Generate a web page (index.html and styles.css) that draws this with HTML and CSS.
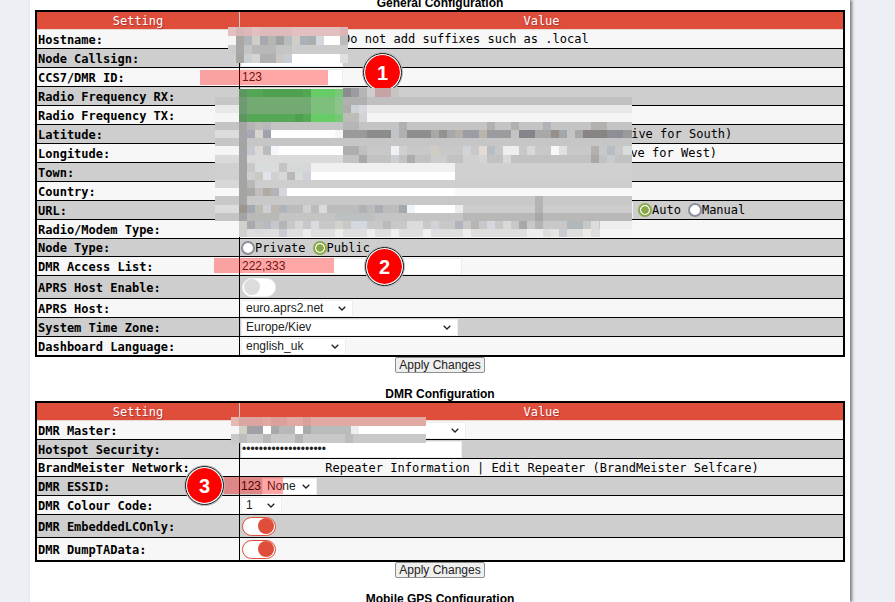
FILE: index.html
```html
<!DOCTYPE html>
<html lang="en">
<head>
<meta charset="utf-8">
<title>Configuration</title>
<link rel="stylesheet" href="styles.css">
</head>
<body>
<div class="page">
  <h2 class="title">General Configuration</h2>
  <table class="config">
    <tr class="head"><th>Setting</th><th>Value</th></tr>
    <tr><td>Hostname:</td><td><input class="w98" type="text"><span class="note">Do not add suffixes such as .local</span></td></tr>
    <tr><td>Node Callsign:</td><td><input class="w102" type="text"></td></tr>
    <tr><td>CCS7/DMR ID:</td><td><input class="w102" type="text" value="123"></td></tr>
    <tr><td>Radio Frequency RX:</td><td><input class="w102" type="text"></td></tr>
    <tr><td>Radio Frequency TX:</td><td><input class="w102" type="text"></td></tr>
    <tr><td>Latitude:</td><td><input class="wlat" type="text"> decimal degrees (positive for South)</td></tr>
    <tr><td>Longitude:</td><td><input class="wlon" type="text"> decimal degrees (negative for West)</td></tr>
    <tr><td>Town:</td><td><input class="w221" type="text"></td></tr>
    <tr><td>Country:</td><td><input class="w221" type="text"></td></tr>
    <tr><td>URL:</td><td><input class="wurl" type="text"><span class="radios url-radios"><input class="radio on" type="radio" name="u" checked>Auto <input class="radio" type="radio" name="u">Manual</span></td></tr>
    <tr><td>Radio/Modem Type:</td><td></td></tr>
    <tr class="short"><td>Node Type:</td><td><span class="radios"><input class="radio" type="radio" name="n">Private <input class="radio on" type="radio" name="n" checked>Public</span></td></tr>
    <tr><td>DMR Access List:</td><td><input class="w221" type="text" value="222,333"></td></tr>
    <tr class="tall"><td>APRS Host Enable:</td><td><span class="toggle"></span></td></tr>
    <tr><td>APRS Host:</td><td><select class="s112"><option>euro.aprs2.net</option></select></td></tr>
    <tr><td>System Time Zone:</td><td><select class="s217"><option>Europe/Kiev</option></select></td></tr>
    <tr class="last"><td>Dashboard Language:</td><td><select class="s105"><option>english_uk</option></select></td></tr>
  </table>
  <div class="actions"><button type="button">Apply Changes</button></div>

  <h2 class="title second">DMR Configuration</h2>
  <table class="config">
    <tr class="head"><th>Setting</th><th>Value</th></tr>
    <tr><td>DMR Master:</td><td><select class="s225"><option>&nbsp;</option></select></td></tr>
    <tr><td>Hotspot Security:</td><td><input class="w221" type="password" value="passwordpasswordpass"></td></tr>
    <tr class="short center"><td>BrandMeister Network:</td><td>Repeater Information | Edit Repeater (BrandMeister Selfcare)</td></tr>
    <tr><td>DMR ESSID:</td><td><span class="essid">123</span><select class="s55"><option>None</option></select></td></tr>
    <tr><td>DMR Colour Code:</td><td><select class="s41"><option>1</option></select></td></tr>
    <tr class="tall"><td>DMR EmbeddedLCOnly:</td><td><span class="toggle on"></span></td></tr>
    <tr class="tall last"><td>DMR DumpTAData:</td><td><span class="toggle on"></span></td></tr>
  </table>
  <div class="actions"><button type="button">Apply Changes</button></div>
  <h2 class="title third">Mobile GPS Configuration</h2>
</div>

<div class="mark mark1"></div>
<div class="mark mark2"></div>
<div class="mark mark3"></div>
<div class="badge badge1">1</div>
<div class="badge badge2">2</div>
<div class="badge badge3">3</div>

<svg class="mosaic" width="895" height="602" viewBox="0 0 895 602" shape-rendering="crispEdges" aria-hidden="true">
  <!-- hostname / callsign -->
  <rect x="228" y="27" width="120" height="9" fill="#e3c0c0"/>
  <rect x="236" y="27" width="8" height="9" fill="#d6b6b6"/><rect x="244" y="27" width="8" height="9" fill="#dcb8b8"/><rect x="260" y="27" width="32" height="9" fill="#dfbaba"/><rect x="340" y="27" width="8" height="9" fill="#dcb4b4"/>
  <rect x="228" y="36" width="120" height="9" fill="#fff"/><rect x="228" y="36" width="8" height="9" fill="#f5f5f5"/>
  <rect x="236" y="36" width="8" height="9" fill="#a9a7a3"/><rect x="244" y="36" width="8" height="9" fill="#b0b6b8"/><rect x="252" y="36" width="8" height="9" fill="#cfcfc8"/><rect x="260" y="36" width="8" height="9" fill="#a8a8ae"/><rect x="268" y="36" width="8" height="9" fill="#b4b6b4"/><rect x="276" y="36" width="8" height="9" fill="#a0a2a4"/><rect x="284" y="36" width="8" height="9" fill="#b8bcbc"/><rect x="292" y="36" width="8" height="9" fill="#d0cec8"/><rect x="300" y="36" width="8" height="9" fill="#a8b2b8"/><rect x="308" y="36" width="8" height="9" fill="#aaaeae"/><rect x="316" y="36" width="8" height="9" fill="#d4d8de"/><rect x="340" y="36" width="8" height="9" fill="#bbb"/>
  <rect x="228" y="45" width="120" height="9" fill="#ccc"/><rect x="236" y="45" width="8" height="9" fill="#a8a8a8"/><rect x="244" y="45" width="8" height="9" fill="#c4c4c4"/><rect x="252" y="45" width="24" height="9" fill="#b8b8b8"/><rect x="276" y="45" width="16" height="9" fill="#c4c4c4"/>
  <rect x="236" y="54" width="112" height="9" fill="#fff"/><rect x="236" y="54" width="8" height="9" fill="#a8a5a0"/><rect x="244" y="54" width="8" height="9" fill="#c8d0d4"/><rect x="252" y="54" width="8" height="9" fill="#d8d4d4"/><rect x="260" y="54" width="16" height="9" fill="#b0b0b0"/><rect x="276" y="54" width="8" height="9" fill="#ccc6c4"/><rect x="284" y="54" width="8" height="9" fill="#c8ccd4"/><rect x="340" y="54" width="8" height="9" fill="#e0e0e0"/>

  <!-- top strip over the first badge -->
  <rect x="343" y="88" width="289" height="9" fill="#cdcdcd"/><rect x="343" y="88" width="8" height="9" fill="#8c8c8c"/><rect x="351" y="88" width="8" height="9" fill="#9b9ba0"/><rect x="359" y="88" width="8" height="9" fill="#b5b5b5"/><rect x="375" y="88" width="16" height="9" fill="#c4a4a4"/><rect x="391" y="88" width="8" height="9" fill="#c8c4c4"/>

  <!-- large block: base bands -->
  <rect x="215" y="97" width="417" height="8" fill="#c0c0c0"/>
  <rect x="215" y="105" width="417" height="8" fill="#e8e8e8"/>
  <rect x="215" y="113" width="417" height="9" fill="#f5f5f5"/>
  <rect x="215" y="122" width="417" height="8" fill="#c4c4c4"/>
  <rect x="215" y="130" width="417" height="8" fill="#9a9a9a"/><rect x="215" y="130" width="24" height="8" fill="#dcdcdc"/>
  <rect x="215" y="138" width="417" height="8" fill="#c6c6c6"/>
  <rect x="215" y="146" width="417" height="9" fill="#c8c8c8"/><rect x="215" y="146" width="24" height="9" fill="#f5f5f5"/>
  <rect x="215" y="155" width="417" height="8" fill="#c2c2c2"/><rect x="215" y="155" width="128" height="8" fill="#dadada"/>
  <rect x="215" y="163" width="417" height="9" fill="#d0d0d0"/><rect x="311" y="163" width="144" height="9" fill="#f0f0f0"/>
  <rect x="215" y="172" width="417" height="8" fill="#d0d0d0"/><rect x="311" y="172" width="144" height="8" fill="#fff"/>
  <rect x="215" y="180" width="417" height="8" fill="#cecece"/><rect x="215" y="180" width="24" height="8" fill="#d8d8d8"/>
  <rect x="215" y="188" width="417" height="8" fill="#f8f8f8"/><rect x="287" y="188" width="168" height="8" fill="#fff"/>
  <rect x="215" y="196" width="417" height="9" fill="#c8c8c8"/>
  <rect x="215" y="205" width="417" height="8" fill="#bcbcbc"/><rect x="215" y="205" width="24" height="8" fill="#dcdcdc"/><rect x="415" y="205" width="40" height="8" fill="#fff"/><rect x="455" y="205" width="177" height="8" fill="#cdcdcd"/>
  <rect x="215" y="213" width="417" height="8" fill="#c4c4c4"/><rect x="463" y="213" width="169" height="8" fill="#b8b8b8"/>
  <rect x="215" y="221" width="417" height="8" fill="#c8c8c8"/><rect x="215" y="221" width="24" height="8" fill="#f7f7f7"/><rect x="600" y="221" width="32" height="8" fill="#eeeeee"/>
  <rect x="215" y="229" width="417" height="8" fill="#dedede"/><rect x="215" y="229" width="24" height="8" fill="#f7f7f7"/><rect x="600" y="229" width="32" height="8" fill="#f5f5f5"/>

  <!-- column at 239 -->
  <rect x="239" y="122" width="8" height="107" fill="#a4a4a4"/>
  <rect x="215" y="97" width="24" height="8" fill="#c6c6c6"/>
  <rect x="239" y="221" width="8" height="8" fill="#d0d0cc"/><rect x="239" y="229" width="8" height="8" fill="#d0d0cc"/>

  <!-- green block -->
  <rect x="239" y="89" width="72" height="8" fill="#53a653"/><rect x="239" y="89" width="8" height="8" fill="#5f9560"/>
  <rect x="239" y="97" width="72" height="8" fill="#72ac72"/><rect x="239" y="97" width="8" height="8" fill="#6f9a72"/>
  <rect x="239" y="105" width="72" height="9" fill="#74a974"/><rect x="239" y="105" width="8" height="9" fill="#6f9a72"/>
  <rect x="239" y="114" width="72" height="8" fill="#55a855"/><rect x="239" y="114" width="8" height="8" fill="#5f9560"/>
  <rect x="263" y="89" width="40" height="8" fill="#4fa04f"/><rect x="295" y="114" width="8" height="8" fill="#4ca14c"/>
  <rect x="311" y="89" width="24" height="8" fill="#66cc66"/><rect x="335" y="89" width="8" height="8" fill="#78c878"/>
  <rect x="311" y="97" width="24" height="17" fill="#7cc07c"/><rect x="335" y="97" width="8" height="17" fill="#8dc38d"/>
  <rect x="311" y="114" width="24" height="8" fill="#66cc66"/><rect x="335" y="114" width="8" height="8" fill="#78c878"/>

  <!-- right of green -->
  <rect x="343" y="97" width="24" height="8" fill="#b0b0b0"/>
  <rect x="343" y="105" width="8" height="8" fill="#adadad"/><rect x="351" y="105" width="8" height="8" fill="#cdd0d4"/><rect x="359" y="105" width="8" height="8" fill="#d8d8dc"/>
  <rect x="343" y="113" width="16" height="9" fill="#bdbdb8"/><rect x="359" y="113" width="8" height="9" fill="#d2d2d8"/>

  <!-- latitude row -->
  <rect x="247" y="122" width="8" height="8" fill="#b4b4b6"/><rect x="255" y="122" width="8" height="8" fill="#bcbcb8"/><rect x="263" y="122" width="8" height="8" fill="#b8b8bc"/>
  <rect x="247" y="130" width="8" height="8" fill="#a8a8b4"/><rect x="255" y="130" width="8" height="8" fill="#d6d6cf"/><rect x="263" y="130" width="8" height="8" fill="#a0a2ae"/>
  <rect x="271" y="130" width="64" height="8" fill="#fff"/><rect x="335" y="130" width="8" height="8" fill="#f6f6f4"/>
  <rect x="343" y="122" width="16" height="8" fill="#b6b6b6"/><rect x="399" y="122" width="8" height="8" fill="#b0b0b0"/><rect x="487" y="122" width="8" height="8" fill="#b0b2b2"/><rect x="511" y="122" width="8" height="8" fill="#b4b0ae"/><rect x="543" y="122" width="8" height="8" fill="#b0b4b8"/><rect x="591" y="122" width="16" height="8" fill="#b4b0ae"/>
  <rect x="367" y="130" width="24" height="8" fill="#8c8c8c"/><rect x="391" y="130" width="8" height="8" fill="#c0c4c8"/><rect x="399" y="130" width="8" height="8" fill="#b0b0b0"/><rect x="407" y="130" width="24" height="8" fill="#8e8e8e"/><rect x="431" y="130" width="8" height="8" fill="#aaa8a4"/><rect x="439" y="130" width="8" height="8" fill="#92928e"/><rect x="447" y="130" width="8" height="8" fill="#a8a8ac"/><rect x="455" y="130" width="8" height="8" fill="#b4b0a8"/><rect x="463" y="130" width="16" height="8" fill="#9a9ea4"/><rect x="479" y="130" width="8" height="8" fill="#bcb4ac"/><rect x="487" y="130" width="24" height="8" fill="#9a9ca0"/><rect x="511" y="130" width="8" height="8" fill="#c4c4c4"/><rect x="519" y="130" width="16" height="8" fill="#84848a"/><rect x="535" y="130" width="16" height="8" fill="#a8a8a8"/><rect x="551" y="130" width="8" height="8" fill="#96908a"/><rect x="559" y="130" width="8" height="8" fill="#a0a8ac"/><rect x="567" y="130" width="8" height="8" fill="#c4c4c4"/><rect x="575" y="130" width="8" height="8" fill="#a8a8a8"/><rect x="583" y="130" width="24" height="8" fill="#888484"/><rect x="607" y="130" width="16" height="8" fill="#8c9094"/>
  <!-- longitude row -->
  <rect x="247" y="146" width="8" height="9" fill="#c4c8d0"/><rect x="255" y="146" width="8" height="9" fill="#dcd8d6"/><rect x="263" y="146" width="8" height="9" fill="#bcbcbc"/><rect x="271" y="146" width="8" height="9" fill="#f4f8fc"/><rect x="279" y="146" width="64" height="9" fill="#fff"/>
  <rect x="343" y="146" width="16" height="9" fill="#b0aeac"/><rect x="359" y="146" width="8" height="9" fill="#c0c0c0"/><rect x="391" y="146" width="8" height="9" fill="#eef0f4"/><rect x="399" y="146" width="8" height="9" fill="#d0d0ce"/><rect x="431" y="146" width="8" height="9" fill="#d0ccc4"/><rect x="463" y="146" width="8" height="9" fill="#d0d4d8"/><rect x="479" y="146" width="8" height="9" fill="#e4dcd4"/><rect x="487" y="146" width="8" height="9" fill="#b8bcc4"/><rect x="503" y="146" width="16" height="9" fill="#eeeef0"/><rect x="527" y="146" width="8" height="9" fill="#d8d8d8"/><rect x="551" y="146" width="8" height="9" fill="#f8f8f8"/><rect x="559" y="146" width="8" height="9" fill="#e0e0dc"/><rect x="591" y="146" width="8" height="9" fill="#b4b0ae"/><rect x="607" y="146" width="8" height="9" fill="#b8bcc4"/><rect x="623" y="146" width="9" height="9" fill="#d8dcdc"/>
  <rect x="359" y="155" width="8" height="8" fill="#a8a8aa"/><rect x="391" y="155" width="8" height="8" fill="#ccd0d2"/><rect x="407" y="155" width="8" height="8" fill="#acacac"/><rect x="431" y="155" width="16" height="8" fill="#cccccc"/><rect x="463" y="155" width="16" height="8" fill="#d0d0d0"/><rect x="479" y="155" width="8" height="8" fill="#d4d4d4"/><rect x="503" y="155" width="8" height="8" fill="#d8d8d8"/><rect x="591" y="155" width="8" height="8" fill="#aaa8a6"/><rect x="607" y="155" width="8" height="8" fill="#c8ccd0"/>
  <!-- town / country -->
  <rect x="247" y="163" width="8" height="9" fill="#c8c8c8"/><rect x="255" y="163" width="24" height="9" fill="#d8dcdc"/><rect x="279" y="163" width="8" height="9" fill="#c4c4c4"/><rect x="287" y="163" width="8" height="9" fill="#d8d8d8"/><rect x="295" y="163" width="16" height="9" fill="#d4d8d8"/>
  <rect x="255" y="172" width="8" height="8" fill="#c8c8c4"/><rect x="263" y="172" width="8" height="8" fill="#e0e4e8"/><rect x="279" y="172" width="8" height="8" fill="#d8d8d8"/><rect x="287" y="172" width="8" height="8" fill="#b8b8b8"/><rect x="295" y="172" width="8" height="8" fill="#d8dcd8"/><rect x="303" y="172" width="8" height="8" fill="#d0d0d8"/>
  <rect x="247" y="180" width="8" height="8" fill="#b8b8b8"/>
  <rect x="247" y="188" width="8" height="8" fill="#aca8a4"/><rect x="255" y="188" width="8" height="8" fill="#bebebe"/><rect x="263" y="188" width="8" height="8" fill="#b0aca4"/><rect x="271" y="188" width="8" height="8" fill="#b4b4b8"/><rect x="279" y="188" width="8" height="8" fill="#d4d8dc"/>
  <!-- url row -->
  <rect x="239" y="205" width="8" height="8" fill="#9c958c"/><rect x="247" y="205" width="8" height="8" fill="#a4a8b4"/><rect x="255" y="205" width="8" height="8" fill="#bcbcb4"/><rect x="263" y="205" width="8" height="8" fill="#ccd0d4"/><rect x="271" y="205" width="8" height="8" fill="#bcb8b0"/><rect x="279" y="205" width="8" height="8" fill="#b0b4b8"/><rect x="303" y="205" width="8" height="8" fill="#d0d0d0"/><rect x="319" y="205" width="8" height="8" fill="#d8dcdc"/><rect x="359" y="205" width="8" height="8" fill="#aeb2b2"/><rect x="375" y="205" width="8" height="8" fill="#aaaeb4"/><rect x="399" y="205" width="8" height="8" fill="#a4a8ac"/><rect x="407" y="205" width="8" height="8" fill="#f0f4f8"/><rect x="455" y="205" width="8" height="8" fill="#ebebeb"/><rect x="535" y="205" width="8" height="8" fill="#b4b4b4"/>
  <rect x="247" y="213" width="32" height="8" fill="#b8bab8"/><rect x="335" y="213" width="40" height="8" fill="#bcc0c0"/><rect x="535" y="213" width="8" height="8" fill="#a8a8a8"/><rect x="535" y="196" width="8" height="17" fill="#b4b4b4"/>
  <!-- modem row -->
  <rect x="247" y="221" width="8" height="8" fill="#aca8b0"/><rect x="255" y="221" width="8" height="8" fill="#bcc0bc"/><rect x="263" y="221" width="8" height="8" fill="#b8bac0"/><rect x="271" y="221" width="8" height="8" fill="#c4c8cc"/><rect x="279" y="221" width="8" height="8" fill="#b4b4b4"/><rect x="295" y="221" width="8" height="8" fill="#d4d8d8"/><rect x="311" y="221" width="8" height="8" fill="#d8dce0"/><rect x="335" y="221" width="8" height="8" fill="#d4d0cc"/><rect x="351" y="221" width="16" height="8" fill="#d4d8e0"/><rect x="383" y="221" width="8" height="8" fill="#b8bcbc"/><rect x="407" y="221" width="16" height="8" fill="#dcdcdc"/><rect x="431" y="221" width="8" height="8" fill="#d0d4d8"/><rect x="455" y="221" width="8" height="8" fill="#b0b4bc"/><rect x="471" y="221" width="8" height="8" fill="#b8b4b0"/><rect x="487" y="221" width="8" height="8" fill="#d4d8dc"/><rect x="503" y="221" width="8" height="8" fill="#dcd8d4"/><rect x="519" y="221" width="8" height="8" fill="#a8a8ac"/><rect x="535" y="221" width="8" height="8" fill="#b4b4b4"/><rect x="567" y="221" width="16" height="8" fill="#b0b8bc"/><rect x="591" y="221" width="8" height="8" fill="#dcdcdc"/>
  <rect x="255" y="229" width="8" height="8" fill="#d8dcdc"/><rect x="279" y="229" width="8" height="8" fill="#c8ccd0"/><rect x="303" y="229" width="8" height="8" fill="#eceaec"/><rect x="335" y="229" width="8" height="8" fill="#ecece8"/><rect x="367" y="229" width="8" height="8" fill="#eceff0"/><rect x="391" y="229" width="8" height="8" fill="#f0f0f0"/><rect x="423" y="229" width="8" height="8" fill="#f0f0ec"/><rect x="463" y="229" width="8" height="8" fill="#f0eeea"/><rect x="527" y="229" width="16" height="8" fill="#eceeee"/><rect x="551" y="229" width="8" height="8" fill="#e8e4e0"/><rect x="583" y="229" width="8" height="8" fill="#ecebe6"/><rect x="559" y="229" width="8" height="8" fill="#c8ccd0"/>

  <!-- dmr master -->
  <rect x="231" y="417" width="195" height="9" fill="#e0aaa2"/><rect x="239" y="417" width="8" height="9" fill="#d8a8a0"/><rect x="247" y="417" width="16" height="9" fill="#dca4a0"/><rect x="271" y="417" width="16" height="9" fill="#dca09c"/><rect x="303" y="417" width="8" height="9" fill="#d8a09a"/><rect x="231" y="417" width="8" height="9" fill="#e8b8b0"/>
  <rect x="231" y="426" width="195" height="8" fill="#fff"/><rect x="231" y="426" width="8" height="8" fill="#f5f5f5"/><rect x="239" y="426" width="8" height="8" fill="#d0d0c4"/><rect x="247" y="426" width="16" height="8" fill="#a0a0a6"/><rect x="271" y="426" width="8" height="8" fill="#a8a8a8"/><rect x="279" y="426" width="16" height="8" fill="#b8b8b8"/><rect x="303" y="426" width="8" height="8" fill="#aaaaaa"/><rect x="311" y="426" width="40" height="8" fill="#b8bcbc"/><rect x="351" y="426" width="8" height="8" fill="#eeeeee"/>
  <rect x="231" y="434" width="195" height="9" fill="#c8c8c8"/><rect x="239" y="434" width="8" height="9" fill="#bcbcbc"/><rect x="263" y="434" width="8" height="9" fill="#b8b8b8"/><rect x="295" y="434" width="8" height="9" fill="#b4b4b4"/><rect x="345" y="434" width="8" height="9" fill="#bcbcbc"/>
</svg>
</body>
</html>
```

FILE: styles.css
```css
* { box-sizing: border-box; }

html, body {
  margin: 0;
  height: 602px;
  overflow: hidden;
}

body {
  position: relative;
  background: #ecf0f5;
  font-family: "DejaVu Sans Mono", monospace;
  font-size: 12px;
  color: #000;
}

.page {
  width: 820px;
  height: 602px;
  margin-left: 30px;
  padding: 0 5px;
  background: #fff;
  box-shadow: 2px 0 3px #777;
  overflow: hidden;
}

.title {
  margin: 0;
  height: 10px;
  font: bold 12px/6px "Liberation Sans", sans-serif;
  text-align: center;
  white-space: nowrap;
}

.title.second { margin-top: 18px; height: 10px; }
.title.third { margin-top: 17px; height: 12px; line-height: 8px; }

.config {
  width: 810px;
  table-layout: fixed;
  border-collapse: separate;
  border-spacing: 0;
  border: 2px solid #000;
}

.config th {
  height: 18px;
  padding: 0;
  background: #df4e3a;
  color: #fff;
  font-weight: normal;
  text-shadow: 1px 1px 1px #a33;
  border-bottom: 1px solid #e8d8d4;
  vertical-align: middle;
}

.config th:first-child {
  width: 203px;
  border-right: 1px solid #e0c8c4;
}

.config td {
  height: 19px;
  padding: 0 0 0 1px;
  border-bottom: 1px solid #000;
  white-space: nowrap;
  vertical-align: middle;
  background: #f7f7f7;
  overflow: hidden;
}

.config td:first-child {
  padding-top: 2px;
  border-right: 1px solid #000;
  font-weight: bold;
}

.config tr:nth-child(odd) td { background: #cecece; }
.config tr.short td { height: 18px; padding-top: 0; }
.config tr.tall td { height: 23px; }
.config tr.last td { border-bottom: 0; height: 18px; }
.config tr.tall.last td { height: 22px; }
.config tr.center td:last-child { text-align: center; }

input[type="text"], input[type="password"], select {
  height: 17px;
  margin: 0;
  padding: 0;
  border: 1px solid #eeeeee;
  background: #fff;
  color: #222;
  font: 12px "Liberation Sans", sans-serif;
  vertical-align: middle;
  border-radius: 0;
}

select {
  appearance: none;
  padding: 0 0 0 4px;
  background: #fff url("data:image/svg+xml,%3Csvg xmlns='http://www.w3.org/2000/svg' width='8' height='5' viewBox='0 0 8 5'%3E%3Cpath d='M.7.7 4 4l3.3-3.3' fill='none' stroke='%23222' stroke-width='1.3'/%3E%3C/svg%3E") no-repeat right 6px center;
}

.w98 { width: 98px; }
.w102 { width: 102px; }
.w221 { width: 221px; }
.wlat { width: 224px; }
.wlon { width: 216px; }
.wurl { width: 392px; }
.s112 { width: 112px; }
.s217 { width: 217px; }
.s105 { width: 105px; }
.s225 { width: 225px; }
.s55 { width: 55px; }
.s41 { width: 41px; }

.note { margin-left: 4px; }

.essid {
  font: 12px "Liberation Sans", sans-serif;
  margin-right: 1px;
  vertical-align: middle;
}

.radios {
  display: inline-flex;
  align-items: center;
  height: 14px;
  vertical-align: middle;
}

.url-radios { margin-left: 5px; }

.radio {
  appearance: none;
  width: 14px;
  height: 14px;
  margin: 0;
  border: 2px solid #8f8f9d;
  border-radius: 50%;
  background: #fff;
}

.radio.on {
  border-color: #8aa84a;
  background: radial-gradient(circle, #8aa84a 0 3.5px, #fff 4px);
}

.radios .radio:not(:first-child) { margin-left: 7px; }

.toggle {
  position: relative;
  display: block;
  width: 34px;
  height: 19px;
  margin-left: 1px;
  border: 1px solid #f0f0f0;
  border-radius: 10px;
  background: #fff;
}

.toggle::after {
  content: "";
  position: absolute;
  left: 1px;
  top: 0.5px;
  width: 16px;
  height: 16px;
  border-radius: 50%;
  background: #dcdcdc;
}

.toggle.on { border-color: #df4e3a; }
.toggle.on::after { left: auto; right: 1px; background: #df4e3a; }

.actions {
  height: 16px;
  display: flex;
  justify-content: center;
}

button {
  width: 90px;
  height: 16px;
  padding: 0;
  border: 1px solid #8f8f8f;
  border-radius: 2px;
  background: #efefef;
  color: #222;
  font: 12px/14px "Liberation Sans", sans-serif;
}

.mark {
  position: absolute;
  background: rgba(255, 0, 0, .35);
}

.mark1 { left: 200px; top: 70px; width: 128px; height: 15px; }
.mark2 { left: 214px; top: 258px; width: 120px; height: 15px; }
.mark3 { left: 224px; top: 477px; width: 59px; height: 17px; }

.badge {
  position: absolute;
  width: 39px;
  height: 39px;
  border: 2px solid #fff;
  border-radius: 50%;
  outline: 1.5px solid #111;
  outline-offset: -1.5px;
  box-shadow: 0 0 0 1px #bbb;
  background: #f00;
  background-clip: padding-box;
  color: #fff;
  font: bold 20px/37px "Liberation Sans", sans-serif;
  text-align: center;
}

.badge1 { left: 363px; top: 53px; }
.badge2 { left: 365px; top: 247px; }
.badge3 { left: 185px; top: 466px; }

.mosaic {
  position: absolute;
  left: 0;
  top: 0;
  pointer-events: none;
}
```
